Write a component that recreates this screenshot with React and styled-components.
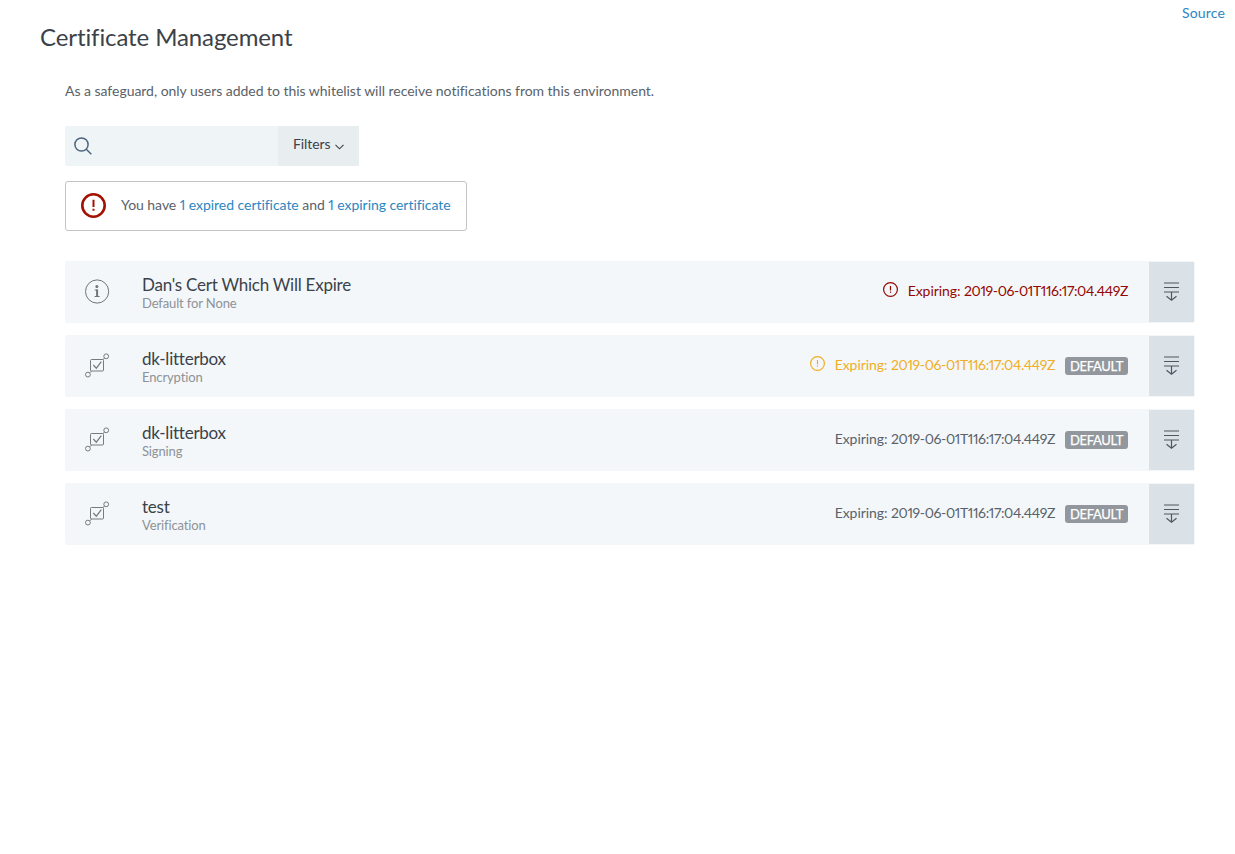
import React from "react";
import styled, { createGlobalStyle } from "styled-components";

const GlobalStyle = createGlobalStyle`
  * { box-sizing: border-box; }
  body {
    margin: 0;
    background: #fff;
    color: #5a6269;
    font-family: Lato, "Liberation Sans", sans-serif;
    font-size: 14px;
    line-height: 20px;
    font-variant-ligatures: none;
    font-variant-numeric: proportional-nums;
  }
  svg { display: block; flex: none; }
`;

const Page = styled.div`
  min-height: 854px;
  display: flex;
  flex-direction: column;
`;

const TopBar = styled.header`
  display: flex;
  justify-content: space-between;
  align-items: flex-start;
  padding: 3px 10px 0 40px;
  height: 81px;
`;

const Title = styled.h1`
  margin: 19px 0 0;
  font-size: 24px;
  line-height: 30px;
  font-weight: 400;
  color: #3b4249;
  letter-spacing: -0.1px;
  white-space: nowrap;
`;

const Link = styled.a`
  color: #2b87c2;
  text-decoration: none;
  cursor: pointer;
`;

const SourceLink = styled(Link)`
  letter-spacing: 0.15px;
`;

const Content = styled.main`
  padding: 0 40px 0 65px;
`;

const Intro = styled.p`
  margin: 0;
  letter-spacing: -0.03px;
  white-space: nowrap;
`;

const SearchBar = styled.div`
  display: flex;
  margin-top: 25px;
  height: 40px;
`;

const SearchField = styled.label`
  display: flex;
  align-items: center;
  width: 213px;
  padding-left: 9px;
  background: #eff4f7;
  border-radius: 2px 0 0 2px;
`;

const SearchInput = styled.input`
  flex: 1;
  min-width: 0;
  border: 0;
  outline: 0;
  background: transparent;
  font: inherit;
`;

const FilterButton = styled.button`
  display: flex;
  align-items: center;
  gap: 5px;
  width: 81px;
  padding: 0 0 4px 15px;
  border: 0;
  background: #e8edf0;
  color: #3b4249;
  font: inherit;
  letter-spacing: -0.1px;

  svg { margin-top: 5px; }
`;

const Notice = styled.section`
  display: flex;
  align-items: center;
  gap: 15px;
  width: 402px;
  height: 50px;
  margin-top: 15px;
  padding: 0 0 1px 15px;
  border: 1px solid #c2c4c8;
  border-radius: 3px;
  letter-spacing: -0.045px;
  white-space: nowrap;
`;

const NoticeIcon = styled.span`
  color: #a31200;
`;

const NoticeText = styled.span`
  padding-bottom: 1px;
`;

const List = styled.ul`
  display: flex;
  flex-direction: column;
  gap: 12px;
  margin: 30px 0 0;
  padding: 0;
  list-style: none;
`;

const Row = styled.li`
  display: flex;
  align-items: stretch;
  height: 62px;
  padding: 1px;
  background: #f3f7fa;
  border-radius: 2px;
`;

const KindIcon = styled.div`
  display: flex;
  align-items: center;
  width: 76px;
  padding: 0 0 1px 19px;
`;

const Names = styled.div`
  flex: 1;
  padding-top: 13px;
`;

const Name = styled.div`
  font-size: 17px;
  line-height: 20px;
  color: #3b4249;
  letter-spacing: -0.24px;
`;

const Usage = styled.div`
  font-size: 13px;
  line-height: 16px;
  color: #8d9297;
  letter-spacing: -0.13px;
`;

const tones = { expired: "#940600", expiring: "#f0ae27", normal: "#5a6269" };

const Status = styled.div`
  display: flex;
  align-items: center;
  padding: 0 21px 2px 0;
  color: ${(p) => tones[p.$tone]};
  white-space: nowrap;

  svg { margin-bottom: 3px; }
`;

const Expiry = styled.span`
  margin-left: 9.5px;
  letter-spacing: -0.05px;
`;

const Timestamp = styled.time`
  letter-spacing: -0.38px;
`;

const Badge = styled.span`
  width: 63px;
  height: 18px;
  margin: 2px 0 0 10px;
  border-radius: 3px;
  background: #92979d;
  color: #fff;
  font-size: 13px;
  line-height: 18px;
  letter-spacing: -0.3px;
  text-align: center;
  -webkit-text-stroke: 0.25px #fff;
`;

const ActionButton = styled.button`
  display: flex;
  align-items: center;
  justify-content: center;
  width: 45px;
  padding: 0 0 1px;
  border: 0;
  background: #dae1e7;
  color: #4f585e;
`;

const SearchIcon = () => (
  <svg width="18" height="18" viewBox="0 0 18 18" fill="none" stroke="#4b657f" strokeWidth="1.5">
    <circle cx="7.5" cy="7.5" r="6.6" />
    <path d="M12 12l5.3 5.3" />
  </svg>
);

const ChevronIcon = () => (
  <svg width="9" height="6" viewBox="0 0 9 6" fill="none" stroke="#3b4249" strokeWidth="1.1">
    <path d="M.5 .8l4 4 4-4" />
  </svg>
);

const AlertIcon = ({ size, ring, bar }) => (
  <svg width={size} height={size} viewBox={`0 0 ${size} ${size}`} fill="none" stroke="currentColor">
    <circle cx={size / 2} cy={size / 2} r={(size - ring) / 2} strokeWidth={ring} />
    <path d={`M${size / 2} ${size * 0.27}V${size * 0.56}M${size / 2} ${size * 0.63}v${bar}`} strokeWidth={bar} />
  </svg>
);

const InfoIcon = () => (
  <svg width="25" height="25" viewBox="0 0 25 25" fill="none" stroke="#6e7479">
    <circle cx="12.1" cy="12.5" r="11.6" strokeWidth="1" />
    <circle cx="11.9" cy="7.4" r="1.5" fill="#6e7479" stroke="none" />
    <path d="M9.7 11h3M9.6 17.5h5" strokeWidth="1" />
    <path d="M12.1 10.5V18" strokeWidth="2" />
  </svg>
);

const NodeIcon = () => (
  <svg width="25" height="25" viewBox="0 0 25 25" fill="none" stroke="#747a7f">
    <rect x="5.5" y="6.5" width="13" height="11.5" rx="1" strokeWidth="1" />
    <path d="M8.3 12l3 3.2 5-6.5" strokeWidth="1.2" />
    <circle cx="21.2" cy="3.3" r="2.4" />
    <circle cx="2.9" cy="21.6" r="2.4" />
    <path d="M19.5 5l-2 2M4.7 19.9l2-2" />
  </svg>
);

const DownloadIcon = () => (
  <svg width="17" height="20" viewBox="0 0 17 20" fill="none" stroke="currentColor" strokeWidth="1.2">
    <path d="M1 1h15M1 5.5h15M1 10h15M8.5 10v8M3.5 14.3l5 4 5-4" />
  </svg>
);

const certificates = [
  { name: "Dan's Cert Which Will Expire", usage: "Default for None", tone: "expired", info: true },
  { name: "dk-litterbox", usage: "Encryption", tone: "expiring", isDefault: true },
  { name: "dk-litterbox", usage: "Signing", tone: "normal", isDefault: true },
  { name: "test", usage: "Verification", tone: "normal", isDefault: true },
];

const CertificateRow = ({ name, usage, tone, info, isDefault }) => (
  <Row>
    <KindIcon>{info ? <InfoIcon /> : <NodeIcon />}</KindIcon>
    <Names>
      <Name>{name}</Name>
      <Usage>{usage}</Usage>
    </Names>
    <Status $tone={tone}>
      {tone !== "normal" && <AlertIcon size={15} ring={1.2} bar={1.2} />}
      <Expiry>Expiring: <Timestamp>2019-06-01T116:17:04.449Z</Timestamp></Expiry>
      {isDefault && <Badge>DEFAULT</Badge>}
    </Status>
    <ActionButton aria-label="Details"><DownloadIcon /></ActionButton>
  </Row>
);

export default function App() {
  return (
    <Page>
      <GlobalStyle />
      <TopBar>
        <Title>Certificate Management</Title>
        <SourceLink>Source</SourceLink>
      </TopBar>
      <Content>
        <Intro>As a safeguard, only users added to this whitelist will receive notifications from this environment.</Intro>
        <SearchBar>
          <SearchField>
            <SearchIcon />
            <SearchInput aria-label="Search" />
          </SearchField>
          <FilterButton>Filters <ChevronIcon /></FilterButton>
        </SearchBar>
        <Notice>
          <NoticeIcon><AlertIcon size={25} ring={2.6} bar={2} /></NoticeIcon>
          <NoticeText>You have <Link>1 expired certificate</Link> and <Link>1 expiring certificate</Link></NoticeText>
        </Notice>
        <List>
          {certificates.map((c, i) => <CertificateRow key={i} {...c} />)}
        </List>
      </Content>
    </Page>
  );
}
